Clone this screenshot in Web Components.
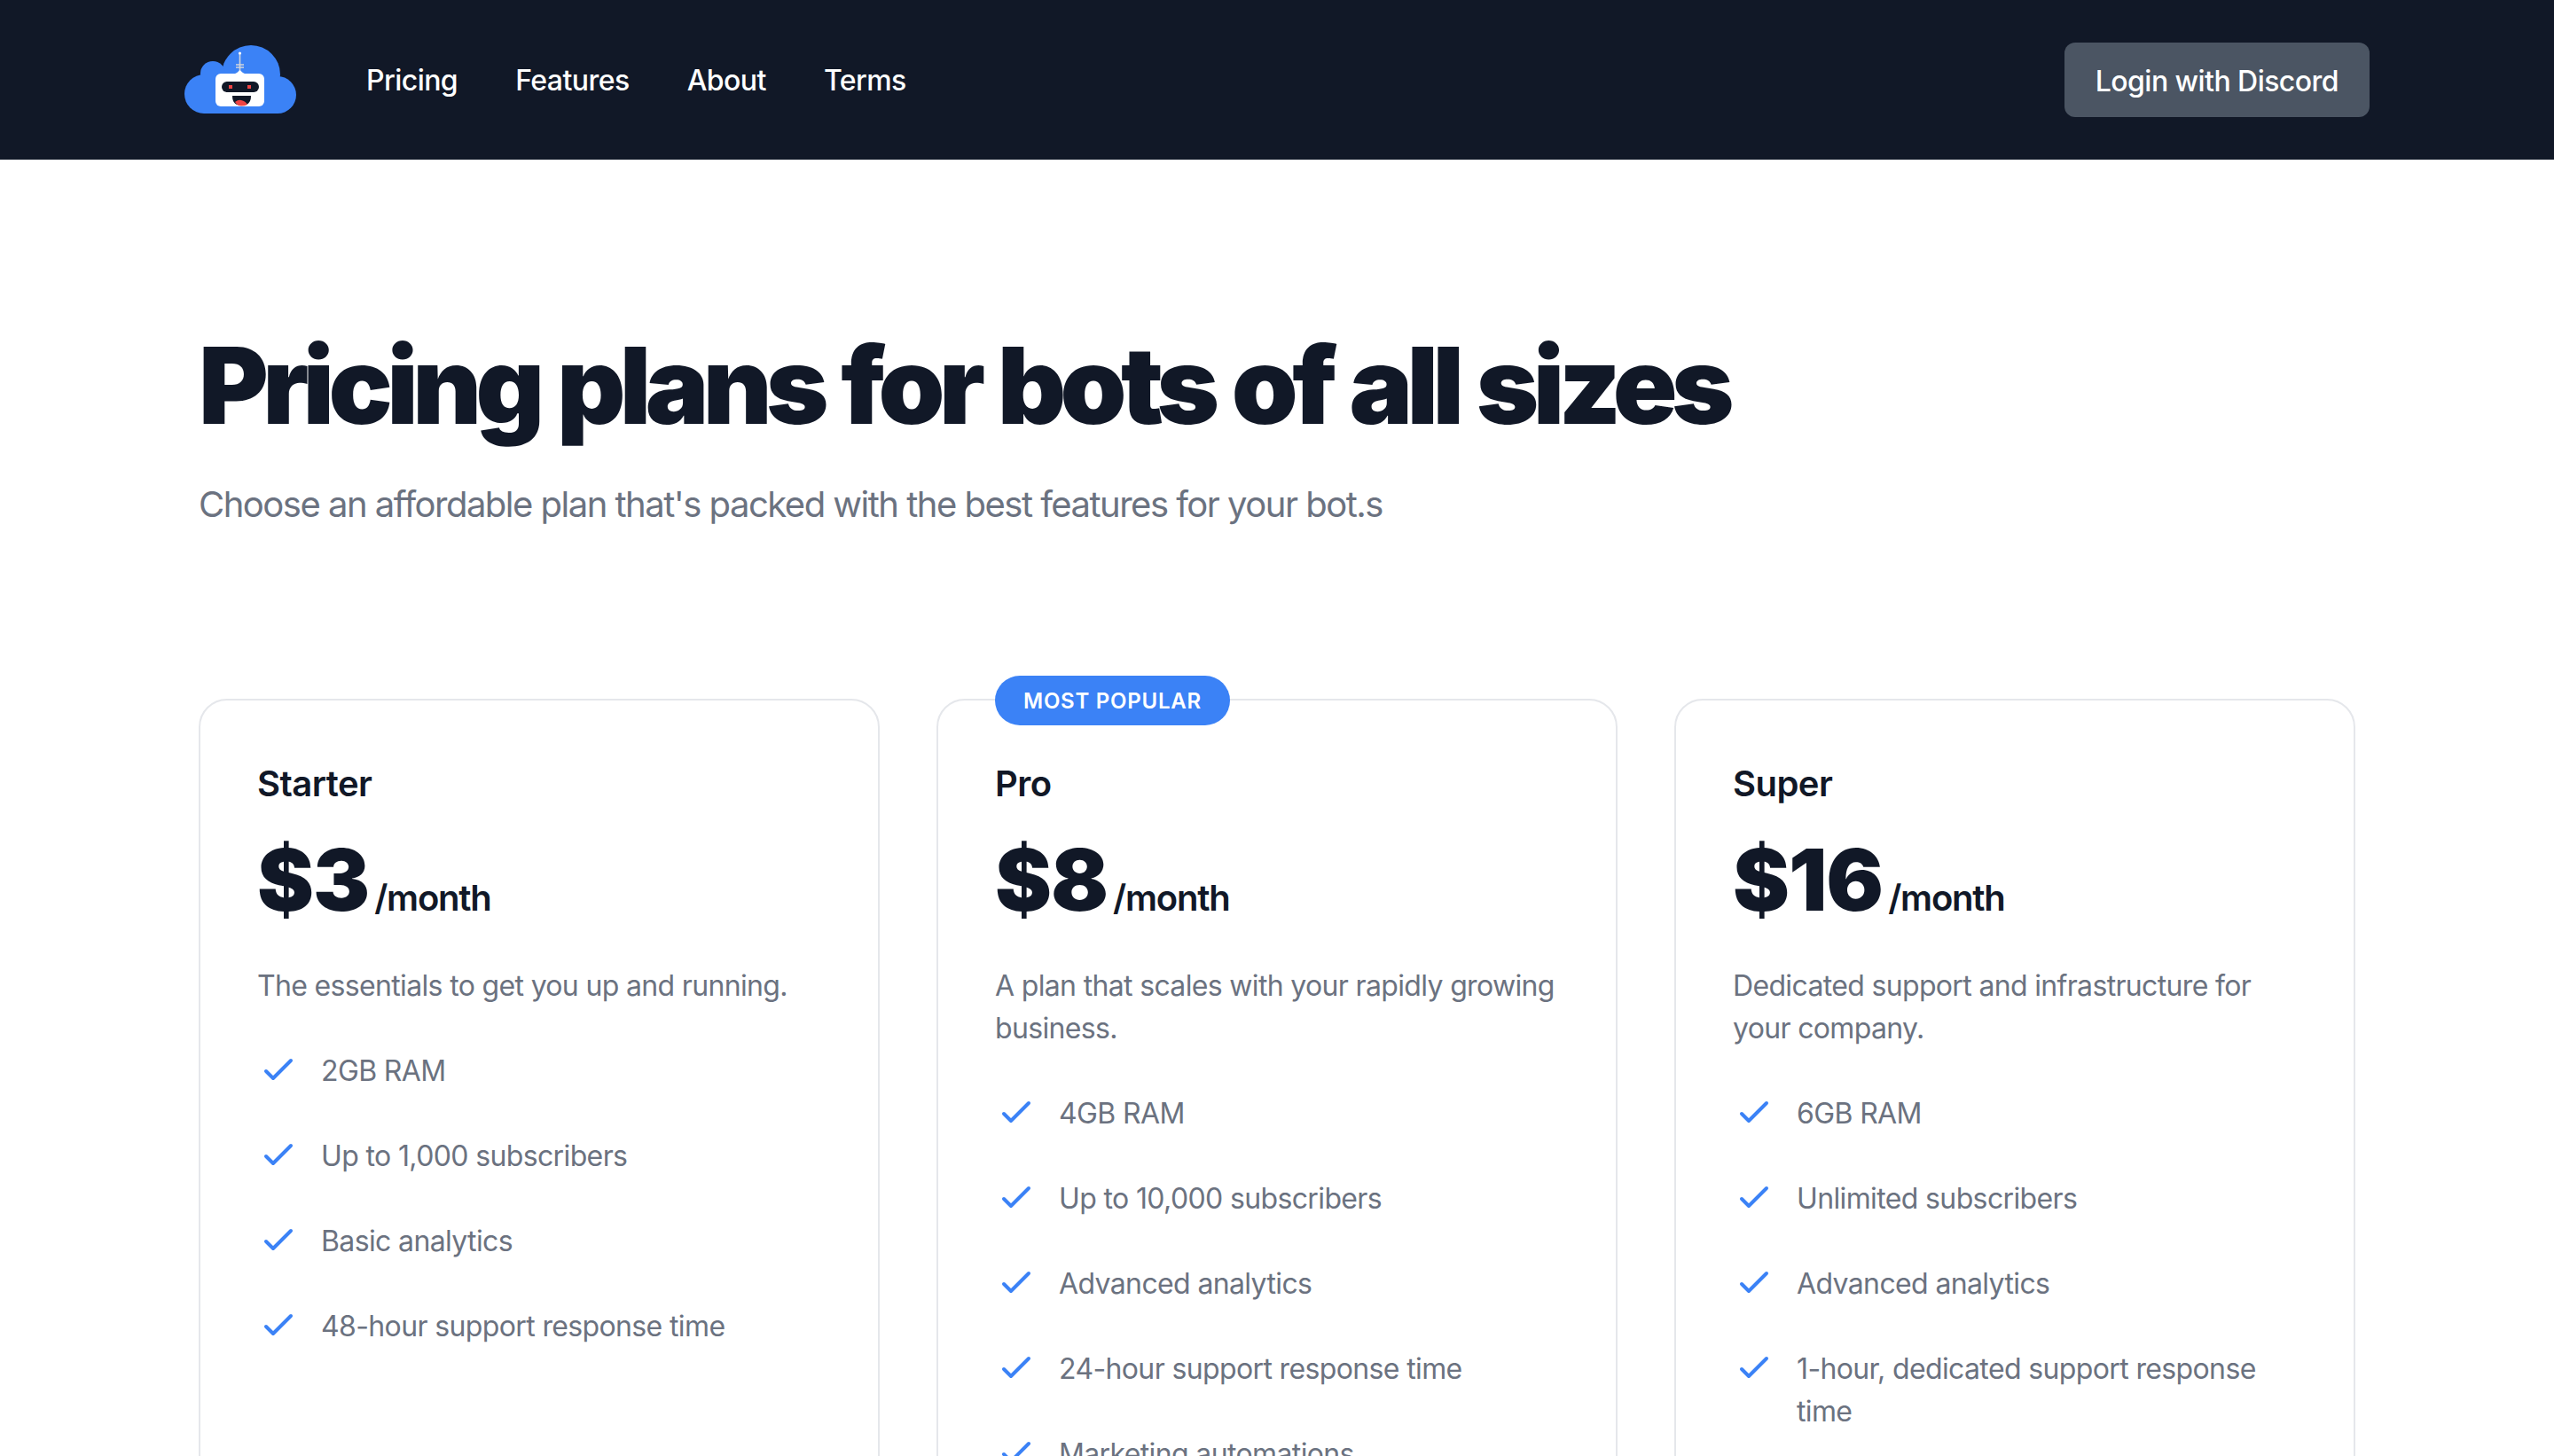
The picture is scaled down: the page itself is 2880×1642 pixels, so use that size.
<!DOCTYPE html>
<html lang="en">
<head>
<meta charset="utf-8">
<title>Pricing</title>
<style>
    html, body { margin: 0; padding: 0; height: 100%; overflow: hidden; background: #fff; }
    body { font-family: Inter, "Liberation Sans", sans-serif; color: #111827; }
</style>
</head>
<body>
<site-header>
    <nav-link>Pricing</nav-link>
    <nav-link>Features</nav-link>
    <nav-link>About</nav-link>
    <nav-link>Terms</nav-link>
    <login-button slot="action">Login with Discord</login-button>
</site-header>
<pricing-page>
    <span slot="title">Pricing plans for bots of all sizes</span>
    <span slot="subtitle">Choose an affordable plan that's packed with the best features for your bot.s</span>
    <pricing-card name="Starter" price="$3" description="The essentials to get you up and running.">
        <feature-item>2GB RAM</feature-item>
        <feature-item>Up to 1,000 subscribers</feature-item>
        <feature-item>Basic analytics</feature-item>
        <feature-item>48-hour support response time</feature-item>
    </pricing-card>
    <pricing-card name="Pro" price="$8" badge="Most popular" description="A plan that scales with your rapidly growing business.">
        <feature-item>4GB RAM</feature-item>
        <feature-item>Up to 10,000 subscribers</feature-item>
        <feature-item>Advanced analytics</feature-item>
        <feature-item>24-hour support response time</feature-item>
        <feature-item>Marketing automations</feature-item>
    </pricing-card>
    <pricing-card name="Super" price="$16" description="Dedicated support and infrastructure for your company.">
        <feature-item>6GB RAM</feature-item>
        <feature-item>Unlimited subscribers</feature-item>
        <feature-item>Advanced analytics</feature-item>
        <feature-item>1-hour, dedicated support response time</feature-item>
    </pricing-card>
</pricing-page>
<script>
class SiteHeader extends HTMLElement {
    connectedCallback() {
        this.attachShadow({ mode: 'open' });
        this.shadowRoot.innerHTML = `
            <style>
                :host { display: block; background: #111827; }
                .inner {
                    max-width: 2464px;
                    height: 180px;
                    margin: 0 auto;
                    display: flex;
                    align-items: center;
                    justify-content: space-between;
                }
                .left { display: flex; align-items: center; }
                .logo { display: block; width: 128px; height: 80px; margin-right: 77px; }
                nav { display: flex; gap: 65px; }
            </style>
            <div class="inner">
                <div class="left">
                    <svg class="logo" viewBox="0 0 128 80" aria-hidden="true">
                        <g fill="#3b82f6">
                            <circle cx="75" cy="34" r="33"/>
                            <circle cx="32" cy="33" r="14"/>
                            <circle cx="22" cy="56" r="22"/>
                            <circle cx="105" cy="57" r="21"/>
                            <rect x="22" y="34" width="83" height="44"/>
                        </g>
                        <path d="M62.5 10v20M58 23h9M58 26h9" stroke="#d1d5db" stroke-width="1.6" fill="none"/>
                        <circle cx="62.5" cy="10" r="1.6" fill="#fff"/>
                        <path d="M55 34q4-1 7.500-5q3.500 4 7.500 5z" fill="#fff"/>
                        <rect x="35" y="33" width="55" height="37" rx="6" fill="#fff"/>
                        <rect x="42" y="42" width="42" height="12" rx="6" fill="#111827"/>
                        <rect x="50" y="46" width="4" height="4" fill="#ef4444"/>
                        <rect x="71" y="46" width="4" height="4" fill="#ef4444"/>
                        <path d="M54 58h21q0 11-10.500 11t-10.500-11z" fill="#111827"/>
                        <path d="M57 65q4-3 7-2q5 1 7 5q-3 1.500-7 1.500q-4 0-7-4.500z" fill="#ef4444"/>
                    </svg>
                    <nav><slot></slot></nav>
                </div>
                <slot name="action"></slot>
            </div>
        `;
    }
}

class NavLink extends HTMLElement {
    connectedCallback() {
        this.attachShadow({ mode: 'open' });
        this.shadowRoot.innerHTML = `
            <style>
                :host { display: block; padding-top: 2px; color: #fff; font-size: 32px; line-height: 48px; font-weight: 500; letter-spacing: -0.55px; }
            </style>
            <slot></slot>
        `;
    }
}

class LoginButton extends HTMLElement {
    connectedCallback() {
        this.attachShadow({ mode: 'open' });
        this.shadowRoot.innerHTML = `
            <style>
                :host {
                    display: block;
                    padding: 20px 35px 16px;
                    border-radius: 12px;
                    background: #4b5563;
                    color: #fff;
                    font-size: 32px;
                    line-height: 48px;
                    font-weight: 500;
                    letter-spacing: -0.55px;
                }
            </style>
            <slot></slot>
        `;
    }
}

class PricingPage extends HTMLElement {
    connectedCallback() {
        this.attachShadow({ mode: 'open' });
        this.shadowRoot.innerHTML = `
            <style>
                :host { display: block; max-width: 2432px; margin: 0 auto; padding-top: 195px; }
                h1 {
                    margin: 0;
                    font-size: 120px;
                    line-height: 120px;
                    font-weight: 900;
                    letter-spacing: -6.6px;
                    word-spacing: 3px;
                    color: #111827;
                }
                p {
                    margin: 46px 0 0;
                    font-size: 40px;
                    line-height: 56px;
                    letter-spacing: -1.51px;
                    color: #6b7280;
                }
                .plans {
                    margin-top: 191px;
                    display: grid;
                    grid-template-columns: repeat(3, 1fr);
                    gap: 64px;
                }
            </style>
            <h1><slot name="title"></slot></h1>
            <p><slot name="subtitle"></slot></p>
            <div class="plans"><slot></slot></div>
        `;
    }
}

class PricingCard extends HTMLElement {
    connectedCallback() {
        this.attachShadow({ mode: 'open' });
        const badge = this.getAttribute('badge');
        this.shadowRoot.innerHTML = `
            <style>
                :host {
                    display: block;
                    position: relative;
                    box-sizing: border-box;
                    min-height: 1100px;
                    padding: 66px 64px 64px;
                    border: 2px solid #e5e7eb;
                    border-radius: 32px;
                    background: #fff;
                }
                .badge {
                    position: absolute;
                    top: -28px;
                    left: 64px;
                    padding: 0 32px;
                    border-radius: 28px;
                    background: #3b82f6;
                    color: #fff;
                    font-size: 24px;
                    line-height: 58px;
                    height: 56px;
                    font-weight: 600;
                    letter-spacing: 0.75px;
                    text-transform: uppercase;
                }
                h3 { margin: 0; font-size: 40px; line-height: 56px; font-weight: 600; letter-spacing: -0.55px; color: #111827; }
                .price { margin-top: 32px; display: flex; align-items: baseline; color: #111827; }
                .amount { font-size: 96px; line-height: 96px; font-weight: 900; letter-spacing: -1px; }
                .period { margin-left: 6px; font-size: 40px; font-weight: 600; letter-spacing: -1.2px; }
                .description { margin: 48px 0 0; font-size: 32px; line-height: 48px; letter-spacing: -0.66px; color: #6b7280; }
                ul { margin: 47px 0 0; padding: 0; display: flex; flex-direction: column; gap: 48px; list-style: none; }
            </style>
            ${badge ? `<div class="badge">${badge}</div>` : ''}
            <h3>${this.getAttribute('name')}</h3>
            <div class="price">
                <span class="amount">${this.getAttribute('price')}</span>
                <span class="period">/month</span>
            </div>
            <p class="description">${this.getAttribute('description')}</p>
            <ul><slot></slot></ul>
        `;
    }
}

class FeatureItem extends HTMLElement {
    connectedCallback() {
        this.attachShadow({ mode: 'open' });
        this.shadowRoot.innerHTML = `
            <style>
                :host {
                    display: flex;
                    gap: 24px;
                    font-size: 32px;
                    line-height: 48px;
                    letter-spacing: -0.63px;
                    color: #6b7280;
                }
                svg { flex: none; width: 48px; height: 48px; margin-top: -1px; }
                span { padding-top: 1px; margin-bottom: -1px; }
            </style>
            <svg viewBox="0 0 24 24" fill="none" stroke="#3b82f6" stroke-width="2" stroke-linecap="round" stroke-linejoin="round" aria-hidden="true">
                <path d="M5 13l4 4L19 7"/>
            </svg>
            <span><slot></slot></span>
        `;
    }
}

customElements.define('site-header', SiteHeader);
customElements.define('nav-link', NavLink);
customElements.define('login-button', LoginButton);
customElements.define('pricing-page', PricingPage);
customElements.define('pricing-card', PricingCard);
customElements.define('feature-item', FeatureItem);
</script>
</body>
</html>
